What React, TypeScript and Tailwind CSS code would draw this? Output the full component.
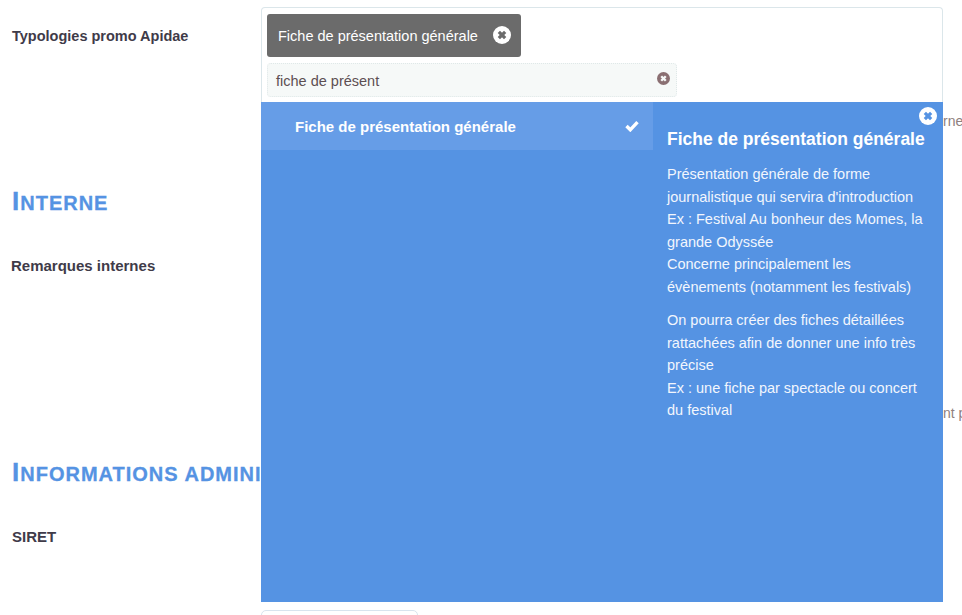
const font = "font-['Liberation_Sans',Arial,sans-serif]";

function CloseIcon({ size, circle, cross }: { size: number; circle: string; cross: string }) {
  return (
    <svg width={size} height={size} viewBox="0 0 20 20" className="shrink-0">
      <circle cx="10" cy="10" r="10" fill={circle} />
      <path d="M6.5 6.5l7 7M13.5 6.5l-7 7" stroke={cross} strokeWidth="3.6" strokeLinecap="butt" />
    </svg>
  );
}

function CheckIcon() {
  return (
    <svg width="14" height="12" viewBox="0 0 14 12">
      <path d="M1.5 6l3.8 3.8 7.2-7.6" fill="none" stroke="#fff" strokeWidth="3.4" />
    </svg>
  );
}

function SectionTitle({ first, rest }: { first: string; rest: string }) {
  return (
    <h2 className="w-[300px] whitespace-nowrap text-[26px] font-bold leading-[28px] tracking-[1px] text-[#5593e3] [-webkit-text-stroke:0.3px_#5593e3]">
      {first}
      <span className="text-[20px] uppercase">{rest}</span>
    </h2>
  );
}

export default function App() {
  return (
    <div className={`${font} relative h-[615px] w-[962px] overflow-hidden bg-white text-[14px] text-[#6d5f62]`}>
      <div className="flex">
        {/* Left labels */}
        <div className="w-[261px] shrink-0 pl-3">
          <div className="pt-[27px] text-[14.5px] font-bold leading-[18px] text-[#3f3b49]">Typologies promo Apidae</div>
          <div className="mt-[142px]">
            <SectionTitle first="I" rest="nterne" />
          </div>
          <div className="-ml-px mt-[40px] text-[15px] font-bold leading-[18px] text-[#3f3b49]">Remarques internes</div>
          <div className="mt-[183px]">
            <SectionTitle first="I" rest="nformations administratives" />
          </div>
          <div className="mt-[40px] text-[15px] font-bold leading-[18px] text-[#3f3b49]">SIRET</div>
        </div>

        {/* Field column */}
        <div className="relative z-10 mt-[7px] h-[95px] w-[682px] rounded-t-[4px] border border-b-0 border-[#dbe6ea] bg-white px-[5px] pt-[6px]">
          <div className="flex h-[43px] w-[254px] items-center justify-between rounded-[3px] bg-[#6b6b6b] pl-[11px] pr-[10px] text-[14.5px] text-white">
            <span className="pt-[2px]">Fiche de présentation générale</span>
            <div className="-mt-[1px]">
              <CloseIcon size={18} circle="#fff" cross="#6b6b6b" />
            </div>
          </div>
          <div className="mt-[6px] flex h-[34px] w-[410px] items-center justify-between rounded-[4px] border border-dotted border-[#dfe8e8] bg-[#f6f9f8] pl-2 pr-[6px] text-[14.5px] text-[#5d4f52]">
            <span className="pt-[3px]">fiche de présent</span>
            <div className="-mt-[3px]">
              <CloseIcon size={13} circle="#8a6f72" cross="#f6f9f8" />
            </div>
          </div>
        </div>
      </div>

      {/* Text of the page behind the dropdown */}
      <span className="absolute left-[943px] top-[111px] whitespace-nowrap text-[14px] text-[#8f7f80]">rne</span>
      <span className="absolute left-[943px] top-[403px] whitespace-nowrap text-[14px] text-[#8f7f80]">nt p</span>
      <div className="absolute left-[942px] top-[342px] h-[54px] w-px bg-[#e6edf2]" />
      <div className="absolute left-[261px] top-[610px] h-[20px] w-[157px] rounded-t-[5px] border border-[#d8e4ee] bg-white" />

      {/* Dropdown */}
      <div className="absolute left-[261px] top-[102px] z-20 flex h-[500px] w-[682px] bg-[#5593e3] text-white">
        <div className="w-[392px] shrink-0">
          <div className="flex h-[48px] items-center justify-between bg-[#669de7] pl-[34px] pr-[14px] text-[15px] font-bold">
            <span className="pt-[3px]">Fiche de présentation générale</span>
            <div className="-mt-[1px]">
              <CheckIcon />
            </div>
          </div>
        </div>
        <div className="relative flex-1 pl-[14px] pr-[10px] pt-[26px]">
          <div className="absolute right-[6px] top-[5px]">
            <CloseIcon size={18} circle="#fff" cross="#5593e3" />
          </div>
          <h3 className="whitespace-nowrap text-[17.5px] font-bold leading-[22px]">Fiche de présentation générale</h3>
          <p className="mt-[13px] text-[14.5px] leading-[22.5px] text-[#f2f6fd]">
            Présentation générale de forme
            <br />
            journalistique qui servira d'introduction
            <br />
            Ex : Festival Au bonheur des Momes, la
            <br />
            grande Odyssée
            <br />
            Concerne principalement les
            <br />
            évènements (notamment les festivals)
          </p>
          <p className="mt-[11px] text-[14.5px] leading-[22.5px] text-[#f2f6fd]">
            On pourra créer des fiches détaillées
            <br />
            rattachées afin de donner une info très
            <br />
            précise
            <br />
            Ex : une fiche par spectacle ou concert
            <br />
            du festival
          </p>
        </div>
      </div>
    </div>
  );
}
